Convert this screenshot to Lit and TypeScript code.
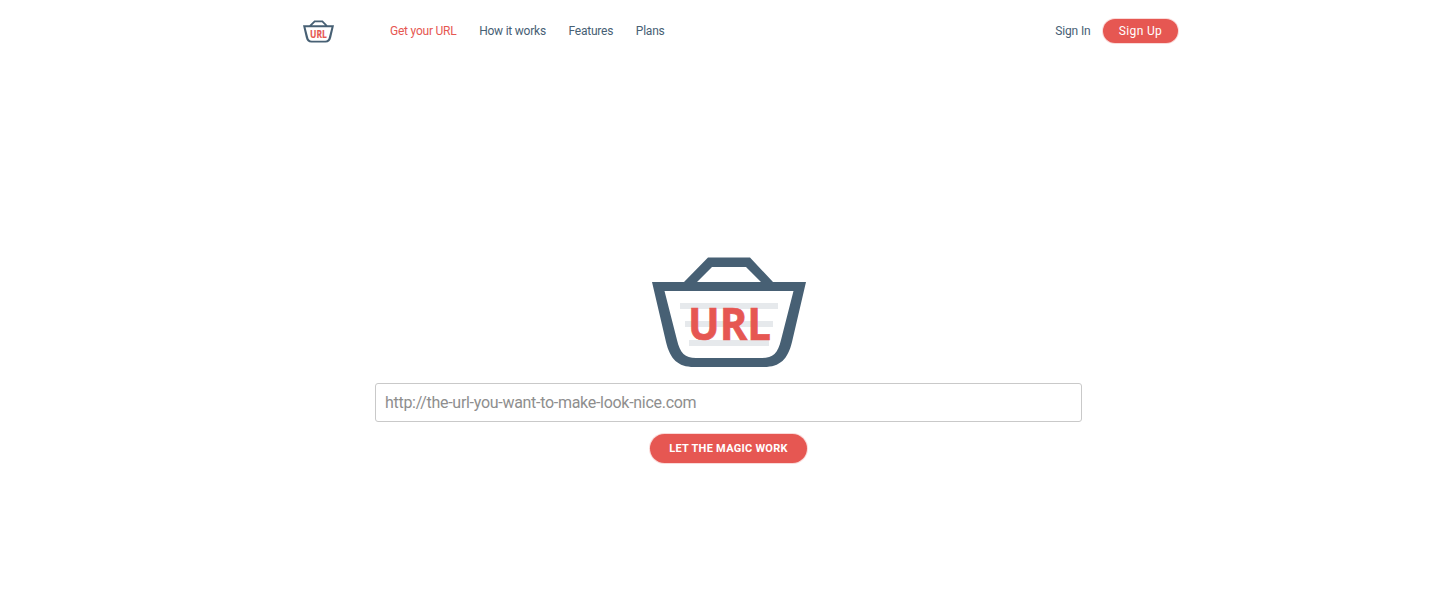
import { LitElement, html, css, svg } from "lit";
import { customElement } from "lit/decorators.js";

const basket = (textSize: number, lines: boolean, tx: number, ty: number, tl: number) => svg`
  <path fill="#476074" fill-rule="evenodd" d="M0 25 H32 L56 0.5 H98 L121 25 H154 L140 85 C136 102 128 110 112 110 H42 C26 110 18 102 14 85 Z M45 25 H109 L94 10 H60 Z M12.5 34 L25 83 C28 96 33 101 44 101 H110 C121 101 126 96 129 83 L141.5 34 Z"/>
  ${lines
    ? svg`<g fill="#e6e9ec">
        <rect x="28" y="46" width="98" height="6"/>
        <rect x="33" y="64" width="88" height="6"/>
        <rect x="37" y="83" width="80" height="6"/>
      </g>`
    : ""}
  <text x="${tx}" y="${ty}" textLength="${tl}" lengthAdjust="spacingAndGlyphs" font-family="'Open Sans', sans-serif" font-weight="700" font-size="${textSize}" fill="#e65752" stroke="#e65752" stroke-width="0.7">URL</text>
`;

@customElement("app-root")
export class AppRoot extends LitElement {
  static styles = css`
    :host {
      display: block;
      height: 600px;
      background: #fff;
      font-family: Roboto, sans-serif;
      color: #476074;
    }
    .nav {
      display: flex;
      align-items: center;
      width: 875px;
      height: 24px;
      margin-left: 303px;
      padding-top: 19px;
    }
    .logo {
      width: 31px;
      height: 23px;
      display: block;
    }
    .links {
      display: flex;
      gap: 22.6px;
      margin-left: 56px;
      padding-bottom: 1px;
      font-size: 12px;
      letter-spacing: -0.22px;
    }
    .links a.active {
      color: #e65752;
    }
    .right {
      margin-left: auto;
      display: flex;
      align-items: center;
      gap: 12.5px;
      font-size: 12px;
    }
    .signin {
      padding-bottom: 1px;
      letter-spacing: -0.15px;
    }
    .signup {
      width: 75px;
      height: 24px;
      box-sizing: border-box;
      padding-bottom: 1px;
      border-radius: 12px;
      background: #e65752;
      box-shadow: 0 0 0 1px rgba(232, 86, 81, 0.22);
      color: #fff;
      display: flex;
      align-items: center;
      justify-content: center;
      font-weight: 400;
      letter-spacing: 0.35px;
    }
    .hero {
      display: flex;
      flex-direction: column;
      align-items: center;
      margin-top: 214px;
      padding-left: 16px;
    }
    .big {
      display: block;
      width: 154px;
      height: 111px;
    }
    .field {
      box-sizing: border-box;
      width: 707px;
      height: 39px;
      margin-top: 15px;
      border: 1px solid #c9c9c9;
      border-radius: 3px;
      padding: 0 9px;
      display: flex;
      align-items: center;
      font-size: 16px;
      letter-spacing: -0.29px;
      color: #8e8e8e;
    }
    .go {
      margin-top: 12px;
      width: 157px;
      height: 29px;
      border-radius: 15px;
      background: #e65752;
      box-shadow: 0 0 0 1px rgba(232, 86, 81, 0.22);
      color: #fff;
      display: flex;
      align-items: center;
      justify-content: center;
      font-size: 11px;
      font-weight: 700;
      letter-spacing: 0.28px;
    }
  `;

  render() {
    return html`
      <div class="nav">
        <svg class="logo" viewBox="0 0 154 111" aria-label="URL basket">
          ${basket(50, false, 35, 87, 84)}
        </svg>
        <div class="links">
          <a class="active">Get your URL</a>
          <a>How it works</a>
          <a>Features</a>
          <a>Plans</a>
        </div>
        <div class="right">
          <a class="signin">Sign In</a>
          <div class="signup">Sign Up</div>
        </div>
      </div>
      <div class="hero">
        <svg class="big" viewBox="0 0 154 111" aria-label="URL basket">
          ${basket(45, true, 36, 82.5, 83)}
        </svg>
        <div class="field">http://the-url-you-want-to-make-look-nice.com</div>
        <div class="go">LET THE MAGIC WORK</div>
      </div>
    `;
  }
}
